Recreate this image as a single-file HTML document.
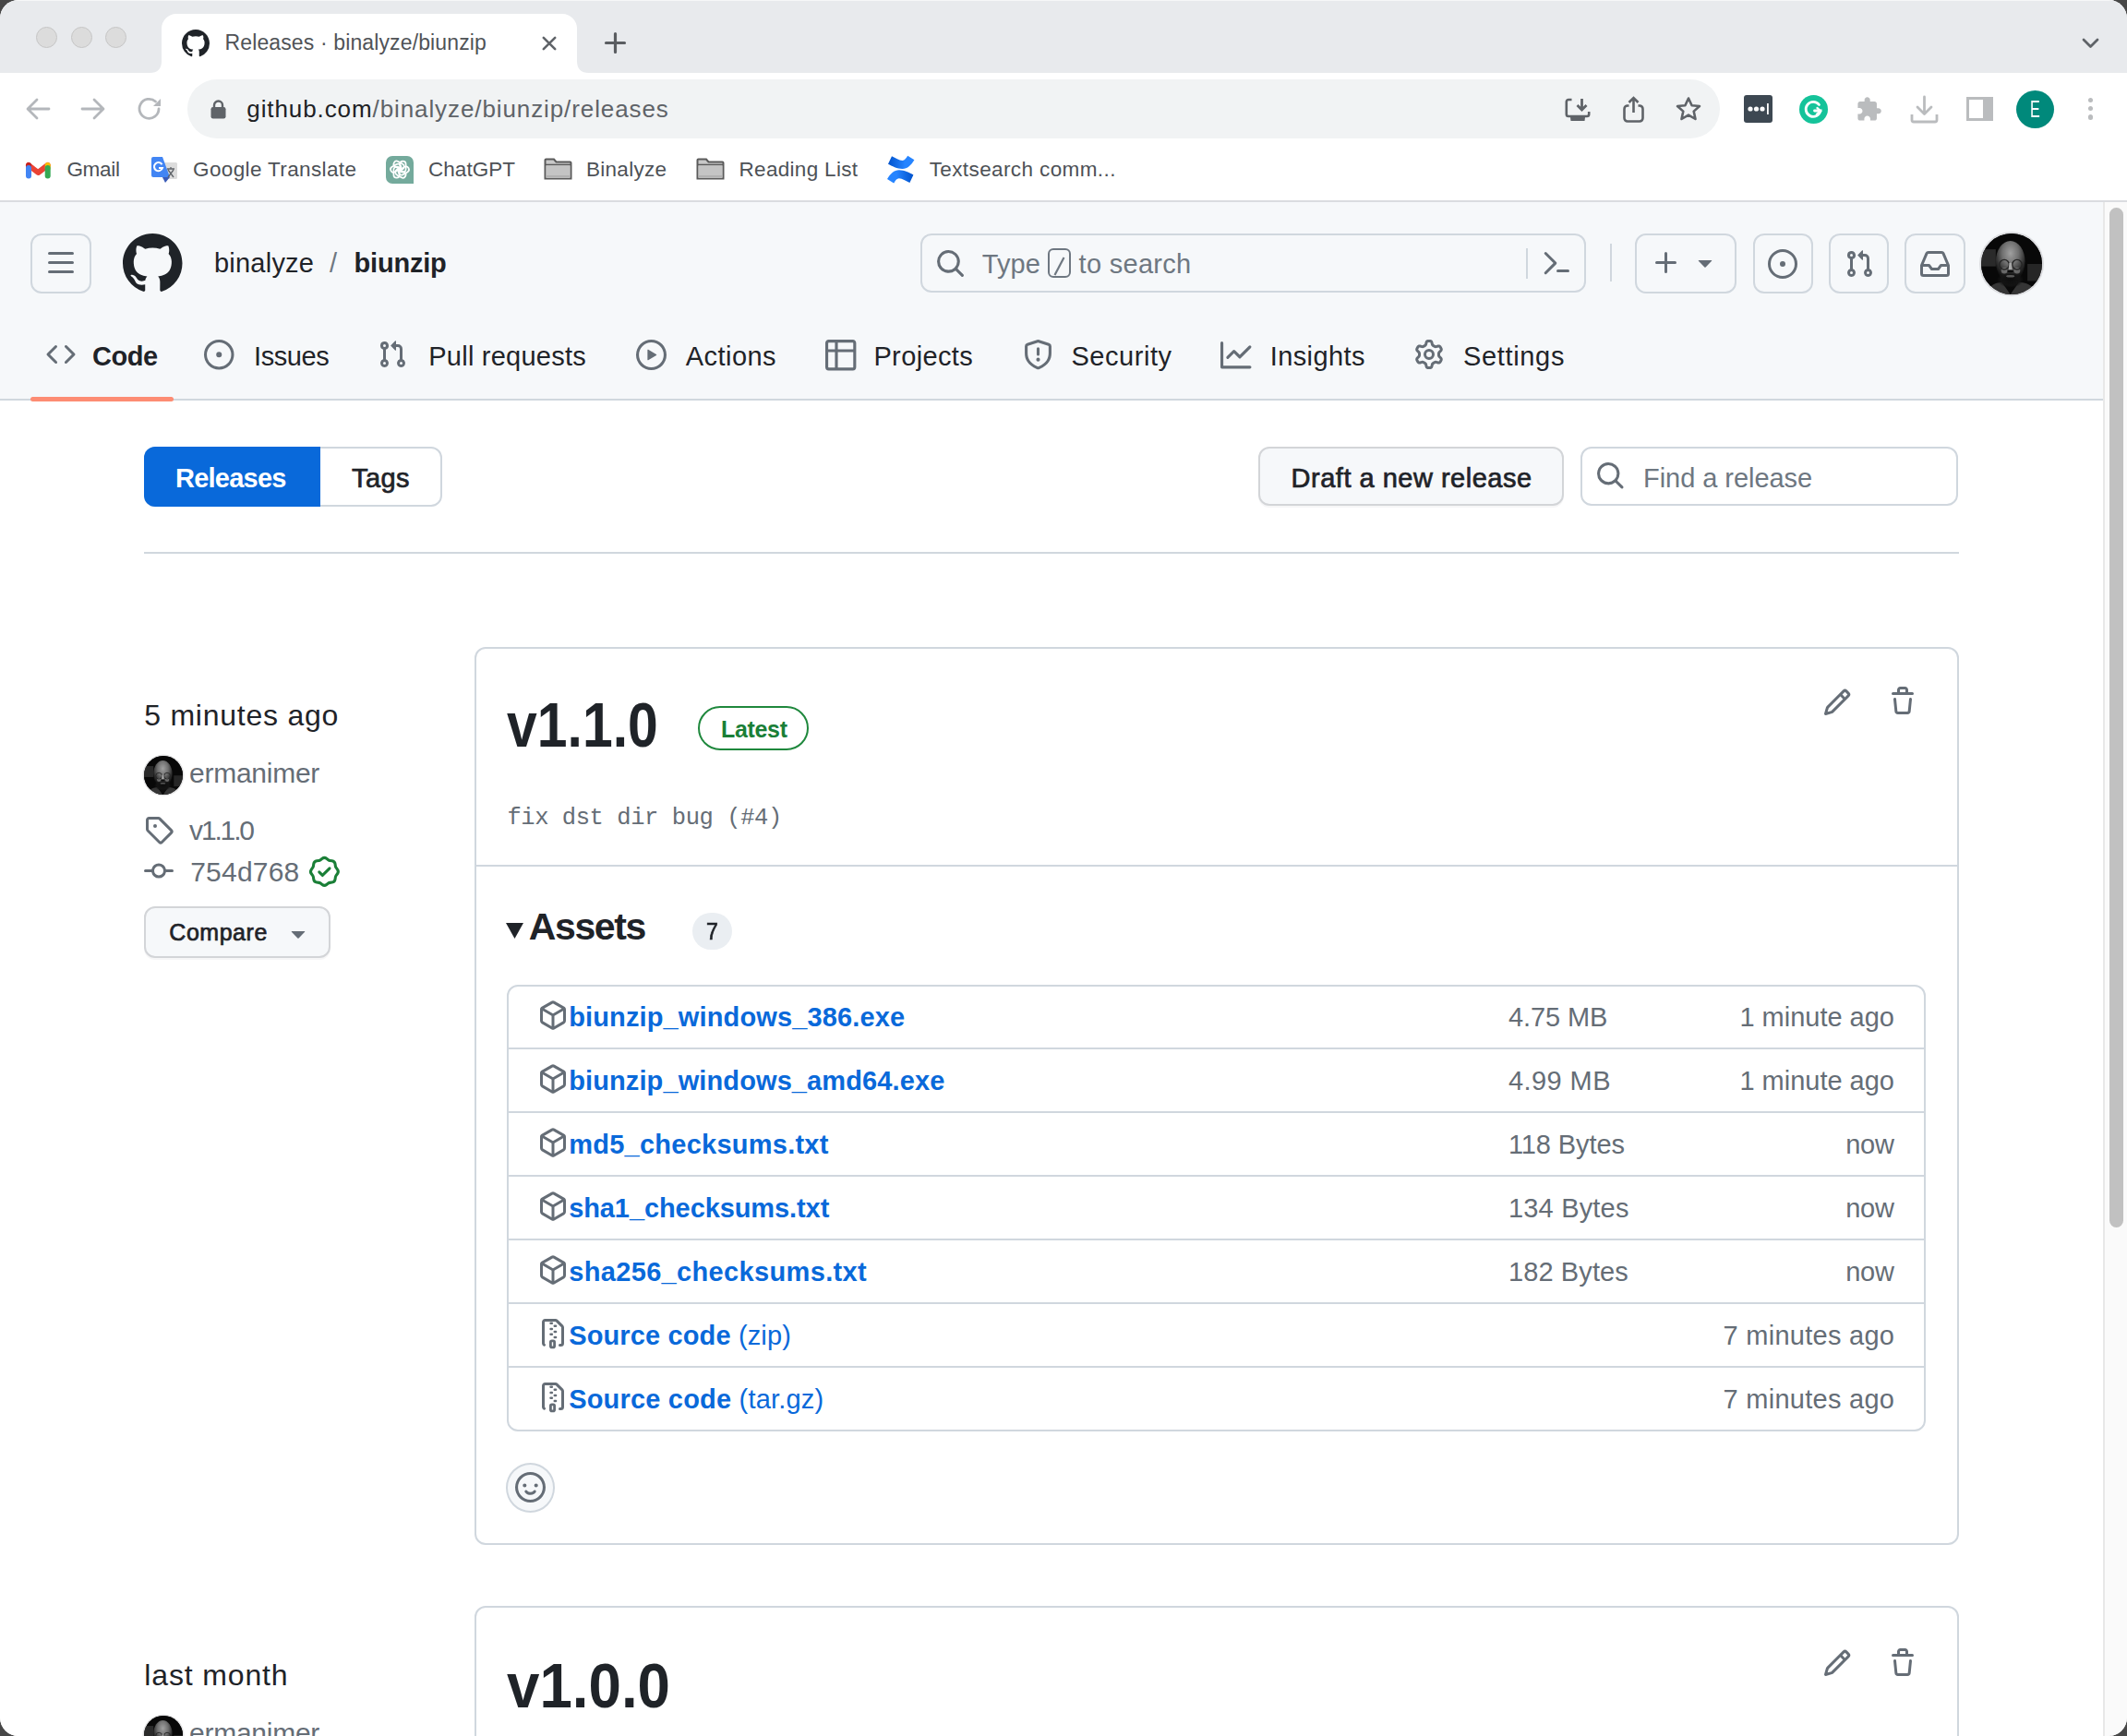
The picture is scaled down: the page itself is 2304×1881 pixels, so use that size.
<!DOCTYPE html>
<html><head><meta charset="utf-8"><title>Releases · binalyze/biunzip</title>
<style>
html,body{margin:0;padding:0;overflow:hidden;}
body{width:2304px;height:1881px;overflow:hidden;background:#474747;position:relative;font-family:"Liberation Sans",sans-serif;}
#win{position:absolute;left:0;top:0;width:2304px;height:1881px;border-radius:20px;overflow:hidden;background:#fff;}
.t{position:absolute;white-space:nowrap;}
.b{position:absolute;}
svg.b{overflow:visible;}
</style></head><body><div id="win">
<div class="b" style="left:0.00px;top:0.00px;width:2304.00px;height:79.00px;background:#e8eaed;"></div>
<div class="b" style="left:0.00px;top:0.00px;width:2304.00px;height:1.20px;background:#f6f7f8;"></div>
<div class="b" style="left:39.00px;top:28.50px;width:23.00px;height:23.00px;border-radius:50%;background:#dcdcdc;border:1.5px solid #c6c6c6;box-sizing:border-box;"></div>
<div class="b" style="left:76.50px;top:28.50px;width:23.00px;height:23.00px;border-radius:50%;background:#dcdcdc;border:1.5px solid #c6c6c6;box-sizing:border-box;"></div>
<div class="b" style="left:114.00px;top:28.50px;width:23.00px;height:23.00px;border-radius:50%;background:#dcdcdc;border:1.5px solid #c6c6c6;box-sizing:border-box;"></div>
<div class="b" style="left:174.50px;top:15.00px;width:450.50px;height:64.00px;background:#fff;border-radius:16px 16px 0 0;"></div>
<svg class="b" style="left:162.00px;top:63.00px;" width="13.00" height="16.00" viewBox="0 0 13 16"><path d="M13 0 V16 H0 Q13 16 13 3 Z" fill="#fff"/></svg>
<svg class="b" style="left:624.50px;top:63.00px;" width="13.00" height="16.00" viewBox="0 0 13 16"><path d="M0 0 V16 H13 Q0 16 0 3 Z" fill="#fff"/></svg>
<svg class="b" style="left:197.00px;top:31.50px;" width="30.00" height="30.00" viewBox="0 0 16 16"><path fill="#1f2328" d="M8 0c4.42 0 8 3.58 8 8a8.013 8.013 0 0 1-5.45 7.59c-.4.08-.55-.17-.55-.38 0-.27.01-1.13.01-2.2 0-.75-.25-1.23-.54-1.48 1.78-.2 3.65-.88 3.65-3.95 0-.88-.31-1.59-.82-2.15.08-.2.36-1.02-.08-2.12 0 0-.67-.22-2.2.82-.64-.18-1.32-.27-2-.27-.68 0-1.36.09-2 .27-1.530-1.03-2.2-.82-2.2-.82-.44 1.1-.16 1.92-.08 2.12-.51.56-.82 1.28-.82 2.15 0 3.06 1.86 3.75 3.64 3.950-.23.2-.44.55-.51 1.07-.46.21-1.61.55-2.33-.66-.15-.24-.6-.83-1.23-.82-.67.01-.27.38.01.53.34.19.73.9.82 1.13.16.45.68 1.31 2.69.94 0 .67.01 1.3.01 1.49 0 .21-.15.45-.55.38A7.995 7.995 0 0 1 0 8c0-4.42 3.58-8 8-8Z"/></svg>
<div class="t" style="left:243.50px;top:35.40px;font-size:23.00px;line-height:23.00px;letter-spacing:0.128px;font-family:'Liberation Sans', sans-serif;"><span style="font-weight:400;color:#505357">Releases · binalyze/biunzip</span></div>
<svg class="b" style="left:586.50px;top:38.50px;" width="16.00" height="16.00" viewBox="0 0 16 16"><path d="M1.8 1.8 L14.2 14.2 M14.2 1.8 L1.8 14.2" stroke="#5f6368" stroke-width="2.6" stroke-linecap="round"/></svg>
<svg class="b" style="left:654.50px;top:35.00px;" width="23.00" height="23.00" viewBox="0 0 23 23"><path d="M11.5 1.5 V21.5 M1.5 11.5 H21.5" stroke="#5a5d61" stroke-width="3.2" stroke-linecap="round"/></svg>
<svg class="b" style="left:2255.00px;top:41.00px;" width="19.00" height="12.00" viewBox="0 0 19 12"><path d="M2 2 L9.5 9.5 L17 2" stroke="#5f6368" stroke-width="2.8" fill="none" stroke-linecap="round" stroke-linejoin="round"/></svg>
<div class="b" style="left:0.00px;top:79.00px;width:2304.00px;height:140.00px;background:#fff;"></div>
<svg class="b" style="left:27.00px;top:104.00px;" width="28.00" height="28.00" viewBox="0 0 28 28"><path d="M26 14 H4 M13 4 L3 14 L13 24" stroke="#b4b7bb" stroke-width="2.8" fill="none" stroke-linecap="round" stroke-linejoin="round"/></svg>
<svg class="b" style="left:87.00px;top:104.00px;" width="28.00" height="28.00" viewBox="0 0 28 28"><path d="M2 14 H24 M15 4 L25 14 L15 24" stroke="#b4b7bb" stroke-width="2.8" fill="none" stroke-linecap="round" stroke-linejoin="round"/></svg>
<svg class="b" style="left:147.00px;top:103.00px;" width="30.00" height="30.00" viewBox="0 0 30 30"><path d="M25 15 A10.5 10.5 0 1 1 21.5 7" stroke="#b4b7bb" stroke-width="2.8" fill="none" stroke-linecap="round"/><path d="M27 4 V12 H19 Z" fill="#b4b7bb"/></svg>
<div class="b" style="left:203.00px;top:86.00px;width:1660.00px;height:64.00px;background:#f1f3f4;border-radius:32px;"></div>
<svg class="b" style="left:228.00px;top:108.00px;" width="17.00" height="21.00" viewBox="0 0 17 21"><path d="M4 9 V6 A4.5 4.5 0 0 1 13 6 V9" stroke="#5f6368" stroke-width="2.4" fill="none"/><rect x="0.5" y="8" width="16" height="12.5" rx="2.2" fill="#5f6368"/></svg>
<div class="t" style="left:267.30px;top:105.40px;font-size:26.00px;line-height:26.00px;letter-spacing:0.903px;font-family:'Liberation Sans', sans-serif;"><span style="font-weight:400;color:#202124">github.com</span><span style="font-weight:400;color:#5f6368">/binalyze/biunzip/releases</span></div>
<svg class="b" style="left:1695.00px;top:106.00px;" width="28.00" height="26.00" viewBox="0 0 28 26"><path d="M7.5 2 H4 A2.2 2.2 0 0 0 1.8 4.2 V17.8 A2.2 2.2 0 0 0 4 20 H24 A2.2 2.2 0 0 0 26.2 17.8 V15" stroke="#5f6368" stroke-width="2.6" fill="none"/><path d="M18.5 1 V12.5 M13.5 8 L18.5 13 L23.5 8" stroke="#5f6368" stroke-width="2.8" fill="none" stroke-linecap="butt" stroke-linejoin="miter"/><path d="M6 21 H22 L21.5 25 H6.5 Z" fill="#5f6368"/></svg>
<svg class="b" style="left:1758.00px;top:104.00px;" width="23.00" height="29.00" viewBox="0 0 23 29"><path d="M6.5 10.5 H5 A3.5 3.5 0 0 0 1.5 14 V24 A3.5 3.5 0 0 0 5 27.5 H18 A3.5 3.5 0 0 0 21.5 24 V14 A3.5 3.5 0 0 0 18 10.5 H16.5" stroke="#5f6368" stroke-width="2.6" fill="none"/><path d="M11.5 18 V2.5 M6.5 7 L11.5 2 L16.5 7" stroke="#5f6368" stroke-width="2.6" fill="none" stroke-linecap="butt"/></svg>
<svg class="b" style="left:1814.00px;top:104.00px;" width="30.00" height="28.00" viewBox="0 0 30 28"><path d="M15 2.5 L18.6 10.2 L27 11 L20.7 16.6 L22.5 25 L15 20.6 L7.5 25 L9.3 16.6 L3 11 L11.4 10.2 Z" stroke="#5f6368" stroke-width="2.6" fill="none" stroke-linejoin="round"/></svg>
<div class="b" style="left:1889.00px;top:103.00px;width:31.00px;height:30.00px;background:#3d4852;border-radius:3px;"></div>
<svg class="b" style="left:1889.00px;top:103.00px;" width="31.00" height="30.00" viewBox="0 0 31 30"><circle cx="7" cy="15" r="2.6" fill="#fff"/><circle cx="13.5" cy="15" r="2.6" fill="#fff"/><circle cx="20" cy="15" r="2.6" fill="#fff"/><rect x="25" y="9" width="1.8" height="12" fill="#fff"/></svg>
<div class="b" style="left:1949.00px;top:103.00px;width:31.00px;height:31.00px;background:#15c39a;border-radius:50%;"></div>
<svg class="b" style="left:1949.00px;top:103.00px;" width="31.00" height="31.00" viewBox="0 0 31 31"><path d="M21.5 10.5 A8 8 0 1 0 23 17 H16.5" stroke="#fff" stroke-width="2.8" fill="none" stroke-linecap="round"/><path d="M19 21 L23 17.5 L19.5 14" stroke="#fff" stroke-width="2.4" fill="none" stroke-linecap="round"/></svg>
<svg class="b" style="left:2010.00px;top:104.00px;" width="29.00" height="29.00" viewBox="0 0 24 24"><path fill="#babcbe" d="M20.5 11H19V7c0-1.1-.9-2-2-2h-4V3.5C13 2.12 11.88 1 10.5 1S8 2.12 8 3.5V5H4c-1.1 0-1.99.9-1.99 2v3.8H3.5c1.49 0 2.7 1.21 2.7 2.7s-1.21 2.7-2.7 2.7H2V20c0 1.1.9 2 2 2h3.8v-1.5c0-1.49 1.21-2.7 2.7-2.7 1.49 0 2.7 1.21 2.7 2.7V22H17c1.1 0 2-.9 2-2v-4h1.5c1.38 0 2.5-1.12 2.5-2.5S21.88 11 20.5 11z"/></svg>
<svg class="b" style="left:2069.00px;top:103.00px;" width="31.00" height="31.00" viewBox="0 0 31 31"><path d="M15.5 2 V20 M8 13 L15.5 20.5 L23 13" stroke="#babcbe" stroke-width="2.8" fill="none" stroke-linecap="round" stroke-linejoin="round"/><path d="M2 21 V27 A2 2 0 0 0 4 29 H27 A2 2 0 0 0 29 27 V21" stroke="#babcbe" stroke-width="2.8" fill="none"/></svg>
<svg class="b" style="left:2130.00px;top:105.00px;" width="29.00" height="26.00" viewBox="0 0 29 26"><rect x="1.5" y="1.5" width="26" height="23" stroke="#babcbe" stroke-width="3" fill="none"/><rect x="18" y="1.5" width="9.5" height="23" fill="#babcbe"/></svg>
<div class="b" style="left:2184.00px;top:97.50px;width:41.00px;height:41.00px;background:#00897b;border-radius:50%;"></div>
<div class="t" style="left:2199.20px;top:105.80px;font-size:25.00px;line-height:25.00px;letter-spacing:0.000px;font-family:'Liberation Sans', sans-serif;transform:scaleX(0.6477);transform-origin:0 0;"><span style="font-weight:400;color:#fff">E</span></div>
<div class="b" style="left:2261.80px;top:106.00px;width:5.20px;height:5.20px;background:#babcbe;border-radius:50%;"></div>
<div class="b" style="left:2261.80px;top:115.20px;width:5.20px;height:5.20px;background:#babcbe;border-radius:50%;"></div>
<div class="b" style="left:2261.80px;top:124.40px;width:5.20px;height:5.20px;background:#babcbe;border-radius:50%;"></div>
<svg class="b" style="left:26.00px;top:171.00px;" width="31.00" height="25.00" viewBox="0 0 31 25"><path d="M5 8 L15.3 16 L25.7 8" stroke="#ea4335" stroke-width="6" fill="none" stroke-linecap="round" stroke-linejoin="round"/><path d="M5 8 V11" stroke="#c5221f" stroke-width="6" stroke-linecap="round"/><path d="M25.7 8 V11" stroke="#fbbc04" stroke-width="6" stroke-linecap="round"/><path d="M5 11 V19.5" stroke="#4285f4" stroke-width="6" stroke-linecap="round"/><path d="M25.7 11 V19.5" stroke="#34a853" stroke-width="6" stroke-linecap="round"/></svg>
<div class="t" style="left:72.40px;top:173.30px;font-size:22.50px;line-height:22.50px;letter-spacing:-0.287px;font-family:'Liberation Sans', sans-serif;"><span style="font-weight:400;color:#4d5156">Gmail</span></div>
<svg class="b" style="left:164.00px;top:169.50px;" width="29.00" height="29.00" viewBox="0 0 29 29"><rect x="12" y="6" width="16" height="18" rx="1.5" fill="#dcdcdc"/><path d="M0 2 A2 2 0 0 1 2 0 H12 L20 22 H2 A2 2 0 0 1 0 20 Z" fill="#4285f4"/><path d="M12 22 L15 28 L20 22 Z" fill="#3a5bb8"/><path d="M11.5 8.2 A4.6 4.6 0 1 0 12 12 H8" stroke="#fff" stroke-width="2" fill="none"/><path d="M17 13 H25 M21 11 V13 M18 14 L24 22 M24 14 L18 22" stroke="#5f6368" stroke-width="1.3" fill="none"/></svg>
<div class="t" style="left:209.00px;top:173.30px;font-size:22.50px;line-height:22.50px;letter-spacing:0.376px;font-family:'Liberation Sans', sans-serif;"><span style="font-weight:400;color:#4d5156">Google Translate</span></div>
<div class="b" style="left:418.40px;top:169.00px;width:29.50px;height:29.60px;background:#74aa9c;border-radius:7px 7px 0 7px;"></div>
<svg class="b" style="left:418.40px;top:169.00px;" width="29.50" height="29.60" viewBox="0 0 29.5 29.6"><g transform="translate(15 14.6)" stroke="#fff" stroke-width="1.7" fill="none"><rect x="-3.2" y="-9" width="6.4" height="12" rx="3.2" transform="rotate(0) translate(3.4 0)" /><rect x="-3.2" y="-9" width="6.4" height="12" rx="3.2" transform="rotate(60) translate(3.4 0)" /><rect x="-3.2" y="-9" width="6.4" height="12" rx="3.2" transform="rotate(120) translate(3.4 0)" /><rect x="-3.2" y="-9" width="6.4" height="12" rx="3.2" transform="rotate(180) translate(3.4 0)" /><rect x="-3.2" y="-9" width="6.4" height="12" rx="3.2" transform="rotate(240) translate(3.4 0)" /><rect x="-3.2" y="-9" width="6.4" height="12" rx="3.2" transform="rotate(300) translate(3.4 0)" /></g></svg>
<div class="t" style="left:464.00px;top:173.30px;font-size:22.50px;line-height:22.50px;letter-spacing:0.037px;font-family:'Liberation Sans', sans-serif;"><span style="font-weight:400;color:#4d5156">ChatGPT</span></div>
<svg class="b" style="left:588.50px;top:171.00px;" width="31.00" height="24.00" viewBox="0 0 31 24"><path d="M1.5 22.5 V2.5 A1 1 0 0 1 2.5 1.5 H11 L13.5 4.5 H28.5 A1 1 0 0 1 29.5 5.5 V22.5 Z" fill="#c8c8c8" stroke="#5a5a5a" stroke-width="2"/><path d="M1.5 7.5 H29.5" stroke="#5a5a5a" stroke-width="1.6"/><rect x="2.5" y="8.3" width="26" height="13.5" fill="#c4c4c4"/><path d="M2.5 20 H28.5" stroke="#ababab" stroke-width="1.5"/></svg>
<div class="t" style="left:635.00px;top:173.30px;font-size:22.50px;line-height:22.50px;letter-spacing:0.279px;font-family:'Liberation Sans', sans-serif;"><span style="font-weight:400;color:#4d5156">Binalyze</span></div>
<svg class="b" style="left:753.50px;top:171.00px;" width="31.00" height="24.00" viewBox="0 0 31 24"><path d="M1.5 22.5 V2.5 A1 1 0 0 1 2.5 1.5 H11 L13.5 4.5 H28.5 A1 1 0 0 1 29.5 5.5 V22.5 Z" fill="#c8c8c8" stroke="#5a5a5a" stroke-width="2"/><path d="M1.5 7.5 H29.5" stroke="#5a5a5a" stroke-width="1.6"/><rect x="2.5" y="8.3" width="26" height="13.5" fill="#c4c4c4"/><path d="M2.5 20 H28.5" stroke="#ababab" stroke-width="1.5"/></svg>
<div class="t" style="left:800.50px;top:173.30px;font-size:22.50px;line-height:22.50px;letter-spacing:0.311px;font-family:'Liberation Sans', sans-serif;"><span style="font-weight:400;color:#4d5156">Reading List</span></div>
<svg class="b" style="left:960.00px;top:168.00px;" width="31.00" height="31.00" viewBox="0 0 31 31"><defs><linearGradient id="cg1" x1="0" y1="0" x2="1" y2="0"><stop offset="0" stop-color="#0052cc"/><stop offset="0.65" stop-color="#2684ff"/></linearGradient></defs><path d="M2 9.8 L6 1.2 C10 3 14 6 17.5 6 C20 6 21.5 3.5 23.2 0.8 L30.4 5.3 C27 11 23 15 17.5 15 C12 15 6 12 2 9.8 Z" fill="url(#cg1)"/><path d="M2 9.8 L6 1.2 C10 3 14 6 17.5 6 C20 6 21.5 3.5 23.2 0.8 L30.4 5.3 C27 11 23 15 17.5 15 C12 15 6 12 2 9.8 Z" fill="url(#cg1)" transform="rotate(180 15.7 15.6)"/></svg>
<div class="t" style="left:1006.70px;top:173.30px;font-size:22.50px;line-height:22.50px;letter-spacing:0.391px;font-family:'Liberation Sans', sans-serif;"><span style="font-weight:400;color:#4d5156">Textsearch comm...</span></div>
<div class="b" style="left:0.00px;top:217.00px;width:2304.00px;height:2.00px;background:#dadce0;"></div>
<div class="b" style="left:0.00px;top:219.00px;width:2278.00px;height:213.00px;background:#f6f8fa;"></div>
<div class="b" style="left:0.00px;top:432.00px;width:2278.00px;height:2.00px;background:#d0d7de;"></div>
<div class="b" style="left:0.00px;top:434.00px;width:2278.00px;height:1447.00px;background:#fff;"></div>
<div class="b" style="left:2278.00px;top:219.00px;width:26.00px;height:1662.00px;background:#fafafa;border-left:2px solid #e8e8e8;box-sizing:border-box;"></div>
<div class="b" style="left:2285.30px;top:225.00px;width:14.70px;height:1104.50px;background:#c1c1c1;border-radius:7.5px;"></div>
<div class="b" style="left:33.30px;top:253.00px;width:65.40px;height:65.00px;background:#f6f8fa;border:2px solid #d0d7de;border-radius:12px;box-sizing:border-box;"></div>
<svg class="b" style="left:50.00px;top:268.80px;" width="32.00" height="32.00" viewBox="0 0 16 16"><path fill="#656d76" d="M1 2.75A.75.75 0 0 1 1.75 2h12.5a.75.75 0 0 1 0 1.5H1.75A.75.75 0 0 1 1 2.75Zm0 5A.75.75 0 0 1 1.75 7h12.5a.75.75 0 0 1 0 1.5H1.75A.75.75 0 0 1 1 7.75ZM1.75 12h12.5a.75.75 0 0 1 0 1.5H1.75a.75.75 0 0 1 0-1.5Z"/></svg>
<svg class="b" style="left:132.60px;top:252.50px;" width="64.50" height="64.50" viewBox="0 0 16 16"><path fill="#1f2328" d="M8 0c4.42 0 8 3.58 8 8a8.013 8.013 0 0 1-5.45 7.59c-.4.08-.55-.17-.55-.38 0-.27.01-1.13.01-2.2 0-.75-.25-1.23-.54-1.48 1.78-.2 3.65-.88 3.65-3.95 0-.88-.31-1.59-.82-2.15.08-.2.36-1.02-.08-2.12 0 0-.67-.22-2.2.82-.64-.18-1.32-.27-2-.27-.68 0-1.36.09-2 .27-1.530-1.03-2.2-.82-2.2-.82-.44 1.1-.16 1.92-.08 2.12-.51.56-.82 1.28-.82 2.15 0 3.06 1.86 3.75 3.64 3.950-.23.2-.44.55-.51 1.07-.46.21-1.61.55-2.33-.66-.15-.24-.6-.83-1.23-.82-.67.01-.27.38.01.53.34.19.73.9.82 1.13.16.45.68 1.31 2.69.94 0 .67.01 1.3.01 1.49 0 .21-.15.45-.55.38A7.995 7.995 0 0 1 0 8c0-4.42 3.58-8 8-8Z"/></svg>
<div class="t" style="left:231.90px;top:270.60px;font-size:29.00px;line-height:29.00px;letter-spacing:0.243px;font-family:'Liberation Sans', sans-serif;"><span style="font-weight:400;color:#1f2328">binalyze</span></div>
<div class="t" style="left:357.00px;top:270.60px;font-size:29.00px;line-height:29.00px;letter-spacing:0.000px;font-family:'Liberation Sans', sans-serif;"><span style="font-weight:400;color:#6e7781">/</span></div>
<div class="t" style="left:383.60px;top:270.60px;font-size:29.00px;line-height:29.00px;letter-spacing:-0.212px;font-family:'Liberation Sans', sans-serif;"><span style="font-weight:600;color:#1f2328">biunzip</span></div>
<div class="b" style="left:996.80px;top:252.50px;width:721.00px;height:64.30px;background:#f6f8fa;border:2px solid #d0d7de;border-radius:12px;box-sizing:border-box;"></div>
<svg class="b" style="left:1012.50px;top:269.00px;" width="33.00" height="33.00" viewBox="0 0 16 16"><path fill="#656d76" d="M10.68 11.74a6 6 0 0 1-7.922-8.982 6 6 0 0 1 8.982 7.922l3.04 3.04a.749.749 0 0 1-.326 1.275.749.749 0 0 1-.734-.215ZM11.5 7a4.499 4.499 0 1 0-8.997 0A4.499 4.499 0 0 0 11.5 7Z"/></svg>
<div class="t" style="left:1063.70px;top:272.30px;font-size:29.00px;line-height:29.00px;letter-spacing:0.076px;font-family:'Liberation Sans', sans-serif;"><span style="font-weight:400;color:#6e7781">Type</span></div>
<div class="b" style="left:1135.30px;top:269.40px;width:24.70px;height:32.10px;border:2px solid #6e7781;border-radius:6px;box-sizing:border-box;"></div>
<svg class="b" style="left:1141.00px;top:278.00px;" width="13.00" height="21.00" viewBox="0 0 13 21"><path d="M11.5 1 L1.5 20" stroke="#6e7781" stroke-width="2.2"/></svg>
<div class="t" style="left:1168.60px;top:272.30px;font-size:29.00px;line-height:29.00px;letter-spacing:0.290px;font-family:'Liberation Sans', sans-serif;"><span style="font-weight:400;color:#6e7781">to search</span></div>
<div class="b" style="left:1652.50px;top:269.00px;width:2.00px;height:32.50px;background:#d0d7de;"></div>
<svg class="b" style="left:1670.00px;top:269.00px;" width="32.00" height="32.00" viewBox="0 0 16 16"><path fill="#656d76" d="m6.354 8.04-4.773 4.773a.75.75 0 1 0 1.061 1.06L7.945 8.57a.75.75 0 0 0 0-1.06L2.642 2.206a.75.75 0 0 0-1.06 1.061L6.353 8.04ZM8.75 11.5a.75.75 0 0 0 0 1.5h5.5a.75.75 0 0 0 0-1.5h-5.5Z"/></svg>
<div class="b" style="left:1743.70px;top:264.30px;width:2.00px;height:41.20px;background:#d0d7de;"></div>
<div class="b" style="left:1770.80px;top:252.80px;width:110.40px;height:65.60px;background:#f6f8fa;border:2px solid #d0d7de;border-radius:12px;box-sizing:border-box;"></div>
<svg class="b" style="left:1788.50px;top:269.00px;" width="32.00" height="32.00" viewBox="0 0 16 16"><path fill="#656d76" d="M7.75 2a.75.75 0 0 1 .75.75V7h4.25a.75.75 0 0 1 0 1.5H8.5v4.25a.75.75 0 0 1-1.5 0V8.5H2.75a.75.75 0 0 1 0-1.5H7V2.75A.75.75 0 0 1 7.75 2Z"/></svg>
<svg class="b" style="left:1830.50px;top:268.00px;" width="32.00" height="32.00" viewBox="0 0 16 16"><path fill="#656d76" d="m4.427 7.427 3.396 3.396a.25.25 0 0 0 .354 0l3.396-3.396A.25.25 0 0 0 11.396 7H4.604a.25.25 0 0 0-.177.427Z"/></svg>
<div class="b" style="left:1898.50px;top:252.80px;width:65.00px;height:65.60px;background:#f6f8fa;border:2px solid #d0d7de;border-radius:12px;box-sizing:border-box;"></div>
<svg class="b" style="left:1915.00px;top:269.50px;" width="32.00" height="32.00" viewBox="0 0 16 16"><path fill="#656d76" d="M8 9.5a1.5 1.5 0 1 0 0-3 1.5 1.5 0 0 0 0 3Z M8 0a8 8 0 1 1 0 16A8 8 0 0 1 8 0ZM1.5 8a6.5 6.5 0 1 0 13 0 6.5 6.5 0 0 0-13 0Z"/></svg>
<div class="b" style="left:1980.80px;top:252.80px;width:65.40px;height:65.60px;background:#f6f8fa;border:2px solid #d0d7de;border-radius:12px;box-sizing:border-box;"></div>
<svg class="b" style="left:1997.50px;top:269.50px;" width="32.00" height="32.00" viewBox="0 0 16 16"><path fill="#656d76" d="M1.5 3.25a2.25 2.25 0 1 1 3 2.122v5.256a2.251 2.251 0 1 1-1.5 0V5.372A2.25 2.25 0 0 1 1.5 3.25Zm5.677-.177L9.573.677A.25.25 0 0 1 10 .854V2.5h1A2.5 2.5 0 0 1 13.5 5v5.628a2.251 2.251 0 1 1-1.5 0V5a1 1 0 0 0-1-1h-1v1.646a.25.25 0 0 1-.427.177L7.177 3.427a.25.25 0 0 1 0-.354ZM3.75 2.5a.75.75 0 1 0 0 1.5.75.75 0 0 0 0-1.5Zm0 9.5a.75.75 0 1 0 0 1.5.75.75 0 0 0 0-1.5Zm8.25.75a.75.75 0 1 0 1.5 0 .75.75 0 0 0-1.5 0Z"/></svg>
<div class="b" style="left:2063.20px;top:252.80px;width:65.90px;height:65.60px;background:#f6f8fa;border:2px solid #d0d7de;border-radius:12px;box-sizing:border-box;"></div>
<svg class="b" style="left:2080.00px;top:269.50px;" width="32.00" height="32.00" viewBox="0 0 16 16"><path fill="#656d76" d="M2.8 2.06A1.75 1.75 0 0 1 4.41 1h7.18c.7 0 1.333.417 1.61 1.06l2.74 6.395c.04.093.06.194.06.295v4.5A1.75 1.75 0 0 1 14.25 15H1.75A1.75 1.75 0 0 1 0 13.250v-4.5c0-.101.02-.202.06-.295Zm1.61.44a.25.25 0 0 0-.23.152L1.887 8H4.75a.75.75 0 0 1 .6.3L6.625 10h2.75l1.275-1.7a.75.75 0 0 1 .6-.3h2.863L11.820 2.652a.25.25 0 0 0-.23-.152Zm10.09 7h-2.875l-1.275 1.7a.75.75 0 0 1-.6.3h-3.5a.75.75 0 0 1-.6-.3L4.375 9.5H1.5v3.75c0 .138.112.25.25.25h12.5a.25.25 0 0 0 .25-.25Z"/></svg>
<div class="b" style="left:2145.50px;top:252.50px;width:66.00px;height:66.00px;border-radius:50%;overflow:hidden;background:#0a0a0a;box-shadow:0 0 0 2.0px rgba(31,35,40,0.12);"><svg width="66.00" height="66.00" viewBox="0 0 100 100" style="display:block;filter:blur(0.73px)"><defs><radialGradient id="av29h" cx="0.5" cy="0.3" r="0.62"><stop offset="0" stop-color="#a0a0a0"/><stop offset="0.45" stop-color="#707070"/><stop offset="0.8" stop-color="#303030"/><stop offset="1" stop-color="#111"/></radialGradient><radialGradient id="av29b" cx="0.5" cy="0.5" r="0.5"><stop offset="0" stop-color="#0d0d0d"/><stop offset="0.7" stop-color="#141414" stop-opacity="0.9"/><stop offset="1" stop-color="#141414" stop-opacity="0"/></radialGradient></defs><rect width="100" height="100" fill="#080808"/><rect x="0" y="26" width="24" height="28" fill="#2a2a2a"/><rect x="76" y="50" width="24" height="28" fill="#262626"/><path d="M8 100 C12 82 30 78 48 80 C68 78 86 82 92 100 Z" fill="#353535"/><path d="M34 80 L48 100 L62 80 Z" fill="#0a0a0a"/><ellipse cx="48" cy="46" rx="24" ry="34" fill="url(#av29h)"/><ellipse cx="48" cy="76" rx="22" ry="13" fill="url(#av29b)"/><circle cx="38" cy="61" r="5" fill="#808080" opacity="0.7"/><circle cx="59" cy="61" r="5" fill="#808080" opacity="0.7"/><circle cx="38" cy="51" r="8" fill="none" stroke="#262626" stroke-width="2.2"/><circle cx="59" cy="51" r="8" fill="none" stroke="#262626" stroke-width="2.2"/><path d="M46 48 L50 48 L51 60 L45 60 Z" fill="#a8a8a8"/><ellipse cx="48" cy="62" rx="5" ry="2.2" fill="#0c0c0c"/><ellipse cx="48" cy="70" rx="7" ry="2" fill="#5a5a5a"/></svg></div>
<svg class="b" style="left:50.00px;top:368.30px;" width="32.00" height="32.00" viewBox="0 0 16 16"><path fill="#656d76" d="m11.28 3.22 4.25 4.25a.75.75 0 0 1 0 1.06l-4.25 4.25a.749.749 0 0 1-1.275-.326.749.749 0 0 1 .215-.734L13.94 8l-3.72-3.72a.749.749 0 0 1 .326-1.275.749.749 0 0 1 .734.215Zm-6.56 0a.751.751 0 0 1 1.042.018.751.751 0 0 1 .018 1.042L2.06 8l3.72 3.72a.749.749 0 0 1-.326 1.275.749.749 0 0 1-.734-.215L.47 8.53a.75.75 0 0 1 0-1.06Z"/></svg>
<div class="t" style="left:100.00px;top:371.60px;font-size:29.00px;line-height:29.00px;letter-spacing:-0.433px;font-family:'Liberation Sans', sans-serif;"><span style="font-weight:600;color:#1f2328">Code</span></div>
<svg class="b" style="left:221.40px;top:368.30px;" width="32.50" height="32.50" viewBox="0 0 16 16"><path fill="#656d76" d="M8 9.5a1.5 1.5 0 1 0 0-3 1.5 1.5 0 0 0 0 3Z M8 0a8 8 0 1 1 0 16A8 8 0 0 1 8 0ZM1.5 8a6.5 6.5 0 1 0 13 0 6.5 6.5 0 0 0-13 0Z"/></svg>
<div class="t" style="left:275.00px;top:371.60px;font-size:29.00px;line-height:29.00px;letter-spacing:-0.402px;font-family:'Liberation Sans', sans-serif;"><span style="font-weight:400;color:#1f2328">Issues</span></div>
<svg class="b" style="left:409.00px;top:368.30px;" width="32.00" height="32.00" viewBox="0 0 16 16"><path fill="#656d76" d="M1.5 3.25a2.25 2.25 0 1 1 3 2.122v5.256a2.251 2.251 0 1 1-1.5 0V5.372A2.25 2.25 0 0 1 1.5 3.25Zm5.677-.177L9.573.677A.25.25 0 0 1 10 .854V2.5h1A2.5 2.5 0 0 1 13.5 5v5.628a2.251 2.251 0 1 1-1.5 0V5a1 1 0 0 0-1-1h-1v1.646a.25.25 0 0 1-.427.177L7.177 3.427a.25.25 0 0 1 0-.354ZM3.75 2.5a.75.75 0 1 0 0 1.5.75.75 0 0 0 0-1.5Zm0 9.5a.75.75 0 1 0 0 1.5.75.75 0 0 0 0-1.5Zm8.25.75a.75.75 0 1 0 1.5 0 .75.75 0 0 0-1.5 0Z"/></svg>
<div class="t" style="left:464.30px;top:371.60px;font-size:29.00px;line-height:29.00px;letter-spacing:0.229px;font-family:'Liberation Sans', sans-serif;"><span style="font-weight:400;color:#1f2328">Pull requests</span></div>
<svg class="b" style="left:689.00px;top:368.30px;" width="33.00" height="33.00" viewBox="0 0 16 16"><path fill="#656d76" d="M8 0a8 8 0 1 1 0 16A8 8 0 0 1 8 0ZM1.5 8a6.5 6.5 0 1 0 13 0 6.5 6.5 0 0 0-13 0Zm4.879-2.773 4.264 2.559a.25.25 0 0 1 0 .428l-4.264 2.559A.25.25 0 0 1 6 10.559V5.442a.25.25 0 0 1 .379-.215Z"/></svg>
<div class="t" style="left:742.70px;top:371.60px;font-size:29.00px;line-height:29.00px;letter-spacing:0.468px;font-family:'Liberation Sans', sans-serif;"><span style="font-weight:400;color:#1f2328">Actions</span></div>
<svg class="b" style="left:894.00px;top:368.30px;" width="33.40" height="33.40" viewBox="0 0 16 16"><path fill="#656d76" d="M0 1.75C0 .784.784 0 1.75 0h12.5C15.216 0 16 .784 16 1.75v12.5A1.75 1.75 0 0 1 14.25 16H1.75A1.75 1.75 0 0 1 0 14.25ZM6.5 6.5v8h7.75a.25.25 0 0 0 .25-.25V6.5Zm8-1.5V1.75a.25.25 0 0 0-.25-.25H6.5V5Zm-13 1.5v7.75c0 .138.112.25.25.25H5v-8ZM5 5V1.5H1.75a.25.25 0 0 0-.25.25V5Z"/></svg>
<div class="t" style="left:946.40px;top:371.60px;font-size:29.00px;line-height:29.00px;letter-spacing:0.379px;font-family:'Liberation Sans', sans-serif;"><span style="font-weight:400;color:#1f2328">Projects</span></div>
<svg class="b" style="left:1107.50px;top:368.30px;" width="33.00" height="33.00" viewBox="0 0 16 16"><path fill="#656d76" d="M7.467.133a1.748 1.748 0 0 1 1.066 0l5.25 1.68A1.75 1.75 0 0 1 15 3.48V7c0 1.566-.32 3.182-1.303 4.682-.983 1.498-2.585 2.813-5.032 3.855a1.697 1.697 0 0 1-1.33 0c-2.447-1.042-4.049-2.357-5.032-3.855C1.32 10.182 1 8.566 1 7V3.48a1.755 1.755 0 0 1 1.217-1.667Zm.61 1.429a.25.25 0 0 0-.153 0l-5.25 1.68a.25.25 0 0 0-.174.238V7c0 1.358.275 2.666 1.057 3.86.784 1.194 2.121 2.34 4.366 3.297a.196.196 0 0 0 .154 0c2.245-.956 3.582-2.104 4.366-3.298C13.225 9.666 13.5 8.36 13.5 7V3.48a.251.251 0 0 0-.174-.237l-5.25-1.68ZM8.75 4.75v3a.75.75 0 0 1-1.5 0v-3a.75.75 0 0 1 1.5 0ZM9 10.5a1 1 0 1 1-2 0 1 1 0 0 1 2 0Z"/></svg>
<div class="t" style="left:1160.40px;top:371.60px;font-size:29.00px;line-height:29.00px;letter-spacing:0.550px;font-family:'Liberation Sans', sans-serif;"><span style="font-weight:400;color:#1f2328">Security</span></div>
<svg class="b" style="left:1322.30px;top:368.30px;" width="33.50" height="33.50" viewBox="0 0 16 16"><path fill="#656d76" d="M1.5 1.75V13.5h13.75a.75.75 0 0 1 0 1.5H.75a.75.75 0 0 1-.75-.75V1.75a.75.75 0 0 1 1.5 0Zm14.28 2.53-5.25 5.25a.75.75 0 0 1-1.06 0L7 7.06 4.28 9.78a.751.751 0 0 1-1.042-.018.751.751 0 0 1-.018-1.042l3.25-3.25a.75.75 0 0 1 1.06 0L10 7.94l4.72-4.72a.751.751 0 0 1 1.042.018.751.751 0 0 1 .018 1.042Z"/></svg>
<div class="t" style="left:1375.70px;top:371.60px;font-size:29.00px;line-height:29.00px;letter-spacing:0.395px;font-family:'Liberation Sans', sans-serif;"><span style="font-weight:400;color:#1f2328">Insights</span></div>
<svg class="b" style="left:1532.40px;top:368.30px;" width="32.00" height="32.00" viewBox="0 0 16 16"><path fill="#656d76" d="M8 0a8.2 8.2 0 0 1 .701.031C9.444.095 9.99.645 10.16 1.29l.288 1.107c.018.066.079.158.212.224.231.114.454.243.668.386.123.082.233.09.299.071l1.103-.303c.644-.176 1.392.021 1.82.63.27.385.506.792.704 1.218.315.675.111 1.422-.364 1.891l-.814.806c-.049.048-.098.147-.088.294.016.257.016.515 0 .772-.01.147.038.246.088.294l.814.806c.475.469.679 1.216.364 1.891a7.977 7.977 0 0 1-.704 1.217c-.428.61-1.176.807-1.82.63l-1.102-.302c-.067-.019-.177-.011-.3.071a5.909 5.909 0 0 1-.668.386c-.133.066-.194.158-.211.224l-.29 1.106c-.168.646-.715 1.196-1.458 1.26a8.006 8.006 0 0 1-1.402 0c-.743-.064-1.289-.614-1.458-1.26l-.289-1.106c-.018-.066-.079-.158-.212-.224a5.738 5.738 0 0 1-.668-.386c-.123-.082-.233-.09-.299-.071l-1.103.303c-.644.176-1.392-.021-1.82-.63a8.12 8.12 0 0 1-.704-1.218c-.315-.675-.111-1.422.363-1.891l.815-.806c.05-.048.098-.147.088-.294a6.214 6.214 0 0 1 0-.772c.01-.147-.038-.246-.088-.294l-.815-.806C.635 6.045.431 5.298.746 4.623a7.92 7.92 0 0 1 .704-1.217c.428-.61 1.176-.807 1.82-.63l1.102.302c.067.019.177.011.3-.071.214-.143.437-.272.668-.386.133-.066.194-.158.211-.224l.29-1.106C6.009.645 6.556.095 7.299.03 7.53.01 7.764 0 8 0Zm-.571 1.525c-.036.003-.108.036-.137.146l-.289 1.105c-.147.561-.549.967-.998 1.189-.173.086-.34.183-.5.29-.417.278-.97.423-1.529.27l-1.103-.303c-.109-.03-.175.016-.195.045-.22.312-.412.644-.573.99-.014.031-.021.11.059.19l.815.806c.411.406.562.957.53 1.456a4.709 4.709 0 0 0 0 .582c.032.499-.119 1.05-.53 1.456l-.815.806c-.081.08-.073.159-.059.19.162.346.353.677.573.989.02.03.085.076.195.046l1.102-.303c.56-.153 1.113-.008 1.53.27.161.107.328.204.501.29.447.222.85.629.997 1.189l.289 1.105c.029.109.101.143.137.146a6.6 6.6 0 0 0 1.142 0c.036-.003.108-.036.137-.146l.289-1.105c.147-.561.549-.967.998-1.189.173-.086.34-.183.5-.29.417-.278.97-.423 1.529-.27l1.103.303c.109.029.175-.016.195-.045.22-.313.411-.644.573-.99.014-.031.021-.11-.059-.19l-.815-.806c-.411-.406-.562-.957-.53-1.456a4.709 4.709 0 0 0 0-.582c-.032-.499.119-1.05.53-1.456l.815-.806c.081-.08.073-.159.059-.19a6.464 6.464 0 0 0-.573-.989c-.02-.03-.085-.076-.195-.046l-1.102.303c-.56.153-1.113.008-1.53-.27a4.44 4.44 0 0 0-.501-.29c-.447-.222-.85-.629-.997-1.189l-.289-1.105c-.029-.11-.101-.143-.137-.146a6.6 6.6 0 0 0-1.142 0ZM11 8a3 3 0 1 1-6 0 3 3 0 0 1 6 0ZM9.5 8a1.5 1.5 0 1 0-3.001.001A1.5 1.5 0 0 0 9.5 8Z"/></svg>
<div class="t" style="left:1585.00px;top:371.60px;font-size:29.00px;line-height:29.00px;letter-spacing:0.660px;font-family:'Liberation Sans', sans-serif;"><span style="font-weight:400;color:#1f2328">Settings</span></div>
<div class="b" style="left:33.30px;top:430.00px;width:155.10px;height:4.50px;background:#fd8c73;border-radius:3px;"></div>
<div class="b" style="left:156.00px;top:484.00px;width:323.00px;height:65.00px;border:2px solid #d0d7de;border-radius:12px;box-sizing:border-box;background:#fff;"></div>
<div class="b" style="left:156.00px;top:484.00px;width:191.20px;height:65.00px;background:#0969da;border-radius:12px 0 0 12px;"></div>
<div class="t" style="left:190.00px;top:504.00px;font-size:29.00px;line-height:29.00px;letter-spacing:-0.753px;font-family:'Liberation Sans', sans-serif;"><span style="font-weight:600;color:#fff">Releases</span></div>
<div class="t" style="left:381.00px;top:504.00px;font-size:29.00px;line-height:29.00px;letter-spacing:0.451px;font-family:'Liberation Sans', sans-serif;"><span style="font-weight:400;color:#1f2328;-webkit-text-stroke:0.7px #1f2328">Tags</span></div>
<div class="b" style="left:1362.60px;top:484.40px;width:331.70px;height:64.00px;background:#f6f8fa;border:2px solid #d3d5d8;border-radius:12px;box-sizing:border-box;box-shadow:0 2px 0 rgba(31,35,40,0.04);"></div>
<div class="t" style="left:1398.60px;top:503.90px;font-size:29.00px;line-height:29.00px;letter-spacing:0.502px;font-family:'Liberation Sans', sans-serif;"><span style="font-weight:400;color:#1f2328;-webkit-text-stroke:0.7px #1f2328">Draft a new release</span></div>
<div class="b" style="left:1712.30px;top:484.40px;width:409.20px;height:64.00px;border:2px solid #d0d7de;border-radius:12px;box-sizing:border-box;background:#fff;"></div>
<svg class="b" style="left:1727.80px;top:498.50px;" width="32.50" height="32.50" viewBox="0 0 16 16"><path fill="#656d76" d="M10.68 11.74a6 6 0 0 1-7.922-8.982 6 6 0 0 1 8.982 7.922l3.04 3.04a.749.749 0 0 1-.326 1.275.749.749 0 0 1-.734-.215ZM11.5 7a4.499 4.499 0 1 0-8.997 0A4.499 4.499 0 0 0 11.5 7Z"/></svg>
<div class="t" style="left:1780.00px;top:504.40px;font-size:29.00px;line-height:29.00px;letter-spacing:-0.044px;font-family:'Liberation Sans', sans-serif;"><span style="font-weight:400;color:#6e7781">Find a release</span></div>
<div class="b" style="left:156.00px;top:598.00px;width:1966.00px;height:2.00px;background:#d0d7de;"></div>
<div class="t" style="left:156.20px;top:758.50px;font-size:32.00px;line-height:32.00px;letter-spacing:0.765px;font-family:'Liberation Sans', sans-serif;"><span style="font-weight:400;color:#1f2328">5 minutes ago</span></div>
<div class="b" style="left:155.80px;top:818.50px;width:42.50px;height:42.50px;border-radius:50%;overflow:hidden;background:#0a0a0a;box-shadow:0 0 0 1.5px rgba(31,35,40,0.12);"><svg width="42.50" height="42.50" viewBox="0 0 100 100" style="display:block;filter:blur(0.47px)"><defs><radialGradient id="av58h" cx="0.5" cy="0.3" r="0.62"><stop offset="0" stop-color="#a0a0a0"/><stop offset="0.45" stop-color="#707070"/><stop offset="0.8" stop-color="#303030"/><stop offset="1" stop-color="#111"/></radialGradient><radialGradient id="av58b" cx="0.5" cy="0.5" r="0.5"><stop offset="0" stop-color="#0d0d0d"/><stop offset="0.7" stop-color="#141414" stop-opacity="0.9"/><stop offset="1" stop-color="#141414" stop-opacity="0"/></radialGradient></defs><rect width="100" height="100" fill="#080808"/><rect x="0" y="26" width="24" height="28" fill="#2a2a2a"/><rect x="76" y="50" width="24" height="28" fill="#262626"/><path d="M8 100 C12 82 30 78 48 80 C68 78 86 82 92 100 Z" fill="#353535"/><path d="M34 80 L48 100 L62 80 Z" fill="#0a0a0a"/><ellipse cx="48" cy="46" rx="24" ry="34" fill="url(#av58h)"/><ellipse cx="48" cy="76" rx="22" ry="13" fill="url(#av58b)"/><circle cx="38" cy="61" r="5" fill="#808080" opacity="0.7"/><circle cx="59" cy="61" r="5" fill="#808080" opacity="0.7"/><circle cx="38" cy="51" r="8" fill="none" stroke="#262626" stroke-width="2.2"/><circle cx="59" cy="51" r="8" fill="none" stroke="#262626" stroke-width="2.2"/><path d="M46 48 L50 48 L51 60 L45 60 Z" fill="#a8a8a8"/><ellipse cx="48" cy="62" rx="5" ry="2.2" fill="#0c0c0c"/><ellipse cx="48" cy="70" rx="7" ry="2" fill="#5a5a5a"/></svg></div>
<div class="t" style="left:205.10px;top:822.80px;font-size:30.00px;line-height:30.00px;letter-spacing:-0.271px;font-family:'Liberation Sans', sans-serif;"><span style="font-weight:400;color:#656d76">ermanimer</span></div>
<svg class="b" style="left:156.00px;top:882.50px;" width="32.00" height="32.00" viewBox="0 0 16 16"><path fill="#656d76" d="M1 7.775V2.75C1 1.784 1.784 1 2.75 1h5.025c.464 0 .91.184 1.238.513l6.25 6.25a1.75 1.75 0 0 1 0 2.474l-5.026 5.026a1.75 1.75 0 0 1-2.474 0l-6.25-6.25A1.752 1.752 0 0 1 1 7.775Zm1.5 0c0 .066.026.13.073.177l6.25 6.25a.25.25 0 0 0 .354 0l5.025-5.025a.25.25 0 0 0 0-.354l-6.250-6.25a.25.25 0 0 0-.177-.073H2.75a.25.25 0 0 0-.25.25ZM6 5a1 1 0 1 1 0 2 1 1 0 0 1 0-2Z"/></svg>
<div class="t" style="left:205.10px;top:885.30px;font-size:30.00px;line-height:30.00px;letter-spacing:-2.164px;font-family:'Liberation Sans', sans-serif;"><span style="font-weight:400;color:#656d76">v1.1.0</span></div>
<svg class="b" style="left:156.00px;top:928.30px;" width="32.00" height="32.00" viewBox="0 0 16 16"><path fill="#656d76" d="M11.93 8.5a4.002 4.002 0 0 1-7.86 0H.75a.75.75 0 0 1 0-1.5h3.32a4.002 4.002 0 0 1 7.86 0h3.32a.75.75 0 0 1 0 1.5Zm-1.43-.75a2.5 2.5 0 1 0-5 0 2.5 2.5 0 0 0 5 0Z"/></svg>
<div class="t" style="left:206.20px;top:930.40px;font-size:30.00px;line-height:30.00px;letter-spacing:0.218px;font-family:'Liberation Sans', sans-serif;"><span style="font-weight:400;color:#656d76">754d768</span></div>
<svg class="b" style="left:335.00px;top:928.40px;" width="32.80" height="32.80" viewBox="0 0 16 16"><path fill="#1a7f37" d="m9.585.52.929.68c.153.112.331.186.518.215l1.138.175a2.678 2.678 0 0 1 2.240 2.24l.174 1.139c.029.187.103.365.215.518l.68.928a2.677 2.677 0 0 1 0 3.17l-.68.928a1.174 1.174 0 0 0-.215.518l-.175 1.138a2.678 2.678 0 0 1-2.241 2.241l-1.138.175a1.17 1.17 0 0 0-.518.215l-.928.68a2.677 2.677 0 0 1-3.17 0l-.928-.68a1.174 1.174 0 0 0-.518-.215L3.83 14.41a2.678 2.678 0 0 1-2.240-2.24l-.175-1.138a1.17 1.17 0 0 0-.215-.518l-.68-.928a2.677 2.677 0 0 1 0-3.17l.68-.928c.112-.153.186-.331.215-.518l.175-1.14a2.678 2.678 0 0 1 2.240-2.24l1.139-.175c.187-.029.365-.103.518-.215l.928-.68a2.677 2.677 0 0 1 3.17 0ZM7.303 1.728l-.927.68a2.67 2.67 0 0 1-1.18.489l-1.137.174a1.179 1.179 0 0 0-.987.987l-.174 1.136a2.677 2.677 0 0 1-.489 1.18l-.68.928a1.18 1.18 0 0 0 0 1.394l.68.927c.256.348.424.753.489 1.18l.174 1.137c.078.509.478.909.987.987l1.136.174a2.67 2.67 0 0 1 1.18.489l.928.68c.414.305.979.305 1.394 0l.927-.68a2.67 2.67 0 0 1 1.18-.489l1.137-.174a1.18 1.18 0 0 0 .987-.987l.174-1.136a2.67 2.67 0 0 1 .489-1.18l.68-.928a1.176 1.176 0 0 0 0-1.394l-.68-.927a2.686 2.686 0 0 1-.489-1.18l-.174-1.137a1.179 1.179 0 0 0-.987-.987l-1.136-.174a2.677 2.677 0 0 1-1.18-.489l-.928-.68a1.176 1.176 0 0 0-1.394 0ZM11.28 6.78l-3.750 3.75a.75.75 0 0 1-1.06 0L4.72 8.78a.751.751 0 0 1 .018-1.042.751.751 0 0 1 1.042-.018L7 8.94l3.22-3.22a.751.751 0 0 1 1.042.018.751.751 0 0 1 .018 1.042Z"/></svg>
<div class="b" style="left:156.20px;top:982.40px;width:201.70px;height:56.00px;background:#f6f8fa;border:2px solid #d3d5d8;border-radius:12px;box-sizing:border-box;box-shadow:0 2px 0 rgba(31,35,40,0.04);"></div>
<div class="t" style="left:183.30px;top:998.30px;font-size:25.00px;line-height:25.00px;letter-spacing:0.529px;font-family:'Liberation Sans', sans-serif;"><span style="font-weight:400;color:#1f2328;-webkit-text-stroke:0.7px #1f2328">Compare</span></div>
<svg class="b" style="left:307.00px;top:994.50px;" width="32.00" height="32.00" viewBox="0 0 16 16"><path fill="#656d76" d="m4.427 7.427 3.396 3.396a.25.25 0 0 0 .354 0l3.396-3.396A.25.25 0 0 0 11.396 7H4.604a.25.25 0 0 0-.177.427Z"/></svg>
<div class="b" style="left:514.00px;top:700.50px;width:1608.00px;height:973.00px;border:2px solid #d0d7de;border-radius:12px;box-sizing:border-box;"></div>
<div class="t" style="left:548.90px;top:750.80px;font-size:68.00px;line-height:68.00px;letter-spacing:0.000px;font-family:'Liberation Sans', sans-serif;transform:scaleX(0.8665);transform-origin:0 0;"><span style="font-weight:600;color:#1f2328">v1.1.0</span></div>
<div class="b" style="left:756.20px;top:765.10px;width:119.40px;height:48.40px;border:2px solid #1f883d;border-radius:24px;box-sizing:border-box;"></div>
<div class="t" style="left:781.00px;top:777.70px;font-size:25.00px;line-height:25.00px;letter-spacing:-0.325px;font-family:'Liberation Sans', sans-serif;"><span style="font-weight:600;color:#1a7f37">Latest</span></div>
<svg class="b" style="left:1974.00px;top:745.00px;" width="32.00" height="32.00" viewBox="0 0 16 16"><path fill="#656d76" d="M11.013 1.427a1.75 1.75 0 0 1 2.474 0l1.086 1.086a1.75 1.75 0 0 1 0 2.474l-8.61 8.61c-.21.21-.47.364-.756.445l-3.251.93a.75.75 0 0 1-.927-.928l.929-3.25c.081-.286.235-.547.445-.758l8.61-8.61Zm.176 4.823L9.75 4.81l-6.286 6.287a.253.253 0 0 0-.064.108l-.558 1.953 1.953-.558a.253.253 0 0 0 .108-.064Zm1.238-3.763a.25.25 0 0 0-.354 0L10.811 3.75l1.439 1.44 1.263-1.263a.25.25 0 0 0 0-.354Z"/></svg>
<svg class="b" style="left:2044.50px;top:744.30px;" width="32.00" height="32.00" viewBox="0 0 16 16"><path fill="#656d76" d="M11 1.75V3h2.25a.75.75 0 0 1 0 1.5H2.75a.75.75 0 0 1 0-1.5H5V1.75C5 .784 5.784 0 6.75 0h2.5C10.216 0 11 .784 11 1.75ZM4.496 6.675l.66 6.6a.25.25 0 0 0 .249.225h5.19a.25.25 0 0 0 .249-.225l.66-6.6a.75.75 0 0 1 1.492.149l-.66 6.6A1.748 1.748 0 0 1 10.595 15h-5.19a1.75 1.75 0 0 1-1.741-1.575l-.66-6.6a.75.75 0 1 1 1.492-.15ZM6.5 1.75V3h3V1.75a.25.25 0 0 0-.25-.25h-2.5a.25.25 0 0 0-.25.25Z"/></svg>
<div class="t" style="left:549.40px;top:874.40px;font-size:25.50px;line-height:25.50px;letter-spacing:-0.434px;font-family:'Liberation Mono', monospace;"><span style="font-weight:400;color:#656d76">fix dst dir bug (#4)</span></div>
<div class="b" style="left:514.00px;top:937.00px;width:1608.00px;height:2.00px;background:#d0d7de;"></div>
<svg class="b" style="left:548.00px;top:999.80px;" width="19.00" height="17.00" viewBox="0 0 19 17"><path d="M0 0 H19 L9.5 17 Z" fill="#1f2328"/></svg>
<div class="t" style="left:572.80px;top:984.10px;font-size:41.00px;line-height:41.00px;letter-spacing:-1.396px;font-family:'Liberation Sans', sans-serif;"><span style="font-weight:600;color:#1f2328">Assets</span></div>
<div class="b" style="left:749.60px;top:989.40px;width:43.00px;height:40.00px;background:#eaeef2;border-radius:20px;"></div>
<div class="t" style="left:765.00px;top:997.00px;font-size:25.00px;line-height:25.00px;letter-spacing:0.000px;font-family:'Liberation Sans', sans-serif;transform:scaleX(0.9281);transform-origin:0 0;"><span style="font-weight:400;color:#1f2328;-webkit-text-stroke:0.7px #1f2328">7</span></div>
<div class="b" style="left:548.50px;top:1067.00px;width:1537.50px;height:483.50px;border:2px solid #d0d7de;border-radius:12px;box-sizing:border-box;"></div>
<svg class="b" style="left:582.50px;top:1083.50px;" width="32.00" height="32.00" viewBox="0 0 16 16"><path fill="#656d76" d="m8.878.392 5.25 3.045c.54.314.872.89.872 1.514v6.098a1.75 1.75 0 0 1-.872 1.514l-5.25 3.045a1.75 1.75 0 0 1-1.756 0l-5.25-3.045A1.75 1.75 0 0 1 1 11.049V4.951c0-.624.332-1.201.872-1.514L7.122.392a1.75 1.75 0 0 1 1.756 0ZM7.875 1.69l-4.63 2.685L8 7.133l4.755-2.758-4.63-2.685a.248.248 0 0 0-.25 0ZM2.5 5.677v5.372c0 .09.047.171.125.216l4.625 2.683V8.432Zm6.25 8.271 4.625-2.683a.25.25 0 0 0 .125-.216V5.677L8.75 8.432Z"/></svg>
<div class="t" style="left:616.20px;top:1088.00px;font-size:29.00px;line-height:29.00px;letter-spacing:0.132px;font-family:'Liberation Sans', sans-serif;"><span style="font-weight:600;color:#0969da">biunzip_windows_386.exe</span></div>
<div class="t" style="left:1634.00px;top:1088.00px;font-size:29.00px;line-height:29.00px;letter-spacing:-0.099px;font-family:'Liberation Sans', sans-serif;"><span style="font-weight:400;color:#656d76">4.75 MB</span></div>
<div class="t" style="left:1884.40px;top:1088.00px;font-size:29.00px;line-height:29.00px;letter-spacing:-0.007px;font-family:'Liberation Sans', sans-serif;"><span style="font-weight:400;color:#656d76">1 minute ago</span></div>
<div class="b" style="left:550.50px;top:1135.07px;width:1533.50px;height:2.00px;background:#d0d7de;"></div>
<svg class="b" style="left:582.50px;top:1152.57px;" width="32.00" height="32.00" viewBox="0 0 16 16"><path fill="#656d76" d="m8.878.392 5.25 3.045c.54.314.872.89.872 1.514v6.098a1.75 1.75 0 0 1-.872 1.514l-5.25 3.045a1.75 1.75 0 0 1-1.756 0l-5.25-3.045A1.75 1.75 0 0 1 1 11.049V4.951c0-.624.332-1.201.872-1.514L7.122.392a1.75 1.75 0 0 1 1.756 0ZM7.875 1.69l-4.63 2.685L8 7.133l4.755-2.758-4.63-2.685a.248.248 0 0 0-.25 0ZM2.5 5.677v5.372c0 .09.047.171.125.216l4.625 2.683V8.432Zm6.25 8.271 4.625-2.683a.25.25 0 0 0 .125-.216V5.677L8.75 8.432Z"/></svg>
<div class="t" style="left:616.20px;top:1157.07px;font-size:29.00px;line-height:29.00px;letter-spacing:0.109px;font-family:'Liberation Sans', sans-serif;"><span style="font-weight:600;color:#0969da">biunzip_windows_amd64.exe</span></div>
<div class="t" style="left:1634.00px;top:1157.07px;font-size:29.00px;line-height:29.00px;letter-spacing:0.417px;font-family:'Liberation Sans', sans-serif;"><span style="font-weight:400;color:#656d76">4.99 MB</span></div>
<div class="t" style="left:1884.40px;top:1157.07px;font-size:29.00px;line-height:29.00px;letter-spacing:-0.007px;font-family:'Liberation Sans', sans-serif;"><span style="font-weight:400;color:#656d76">1 minute ago</span></div>
<div class="b" style="left:550.50px;top:1204.14px;width:1533.50px;height:2.00px;background:#d0d7de;"></div>
<svg class="b" style="left:582.50px;top:1221.64px;" width="32.00" height="32.00" viewBox="0 0 16 16"><path fill="#656d76" d="m8.878.392 5.25 3.045c.54.314.872.89.872 1.514v6.098a1.75 1.75 0 0 1-.872 1.514l-5.25 3.045a1.75 1.75 0 0 1-1.756 0l-5.25-3.045A1.75 1.75 0 0 1 1 11.049V4.951c0-.624.332-1.201.872-1.514L7.122.392a1.75 1.75 0 0 1 1.756 0ZM7.875 1.69l-4.63 2.685L8 7.133l4.755-2.758-4.63-2.685a.248.248 0 0 0-.25 0ZM2.5 5.677v5.372c0 .09.047.171.125.216l4.625 2.683V8.432Zm6.25 8.271 4.625-2.683a.25.25 0 0 0 .125-.216V5.677L8.75 8.432Z"/></svg>
<div class="t" style="left:616.20px;top:1226.14px;font-size:29.00px;line-height:29.00px;letter-spacing:0.247px;font-family:'Liberation Sans', sans-serif;"><span style="font-weight:600;color:#0969da">md5_checksums.txt</span></div>
<div class="t" style="left:1634.00px;top:1226.14px;font-size:29.00px;line-height:29.00px;letter-spacing:-0.115px;font-family:'Liberation Sans', sans-serif;"><span style="font-weight:400;color:#656d76">118 Bytes</span></div>
<div class="t" style="left:1999.20px;top:1226.14px;font-size:29.00px;line-height:29.00px;letter-spacing:-0.237px;font-family:'Liberation Sans', sans-serif;"><span style="font-weight:400;color:#656d76">now</span></div>
<div class="b" style="left:550.50px;top:1273.21px;width:1533.50px;height:2.00px;background:#d0d7de;"></div>
<svg class="b" style="left:582.50px;top:1290.71px;" width="32.00" height="32.00" viewBox="0 0 16 16"><path fill="#656d76" d="m8.878.392 5.25 3.045c.54.314.872.89.872 1.514v6.098a1.75 1.75 0 0 1-.872 1.514l-5.25 3.045a1.75 1.75 0 0 1-1.756 0l-5.25-3.045A1.75 1.75 0 0 1 1 11.049V4.951c0-.624.332-1.201.872-1.514L7.122.392a1.75 1.75 0 0 1 1.756 0ZM7.875 1.69l-4.63 2.685L8 7.133l4.755-2.758-4.63-2.685a.248.248 0 0 0-.25 0ZM2.5 5.677v5.372c0 .09.047.171.125.216l4.625 2.683V8.432Zm6.25 8.271 4.625-2.683a.25.25 0 0 0 .125-.216V5.677L8.75 8.432Z"/></svg>
<div class="t" style="left:616.20px;top:1295.21px;font-size:29.00px;line-height:29.00px;letter-spacing:-0.095px;font-family:'Liberation Sans', sans-serif;"><span style="font-weight:600;color:#0969da">sha1_checksums.txt</span></div>
<div class="t" style="left:1634.00px;top:1295.21px;font-size:29.00px;line-height:29.00px;letter-spacing:0.180px;font-family:'Liberation Sans', sans-serif;"><span style="font-weight:400;color:#656d76">134 Bytes</span></div>
<div class="t" style="left:1999.20px;top:1295.21px;font-size:29.00px;line-height:29.00px;letter-spacing:-0.237px;font-family:'Liberation Sans', sans-serif;"><span style="font-weight:400;color:#656d76">now</span></div>
<div class="b" style="left:550.50px;top:1342.28px;width:1533.50px;height:2.00px;background:#d0d7de;"></div>
<svg class="b" style="left:582.50px;top:1359.78px;" width="32.00" height="32.00" viewBox="0 0 16 16"><path fill="#656d76" d="m8.878.392 5.25 3.045c.54.314.872.89.872 1.514v6.098a1.75 1.75 0 0 1-.872 1.514l-5.25 3.045a1.75 1.75 0 0 1-1.756 0l-5.25-3.045A1.75 1.75 0 0 1 1 11.049V4.951c0-.624.332-1.201.872-1.514L7.122.392a1.75 1.75 0 0 1 1.756 0ZM7.875 1.69l-4.63 2.685L8 7.133l4.755-2.758-4.63-2.685a.248.248 0 0 0-.25 0ZM2.5 5.677v5.372c0 .09.047.171.125.216l4.625 2.683V8.432Zm6.25 8.271 4.625-2.683a.25.25 0 0 0 .125-.216V5.677L8.75 8.432Z"/></svg>
<div class="t" style="left:616.20px;top:1364.28px;font-size:29.00px;line-height:29.00px;letter-spacing:0.343px;font-family:'Liberation Sans', sans-serif;"><span style="font-weight:600;color:#0969da">sha256_checksums.txt</span></div>
<div class="t" style="left:1634.00px;top:1364.28px;font-size:29.00px;line-height:29.00px;letter-spacing:0.105px;font-family:'Liberation Sans', sans-serif;"><span style="font-weight:400;color:#656d76">182 Bytes</span></div>
<div class="t" style="left:1999.20px;top:1364.28px;font-size:29.00px;line-height:29.00px;letter-spacing:-0.237px;font-family:'Liberation Sans', sans-serif;"><span style="font-weight:400;color:#656d76">now</span></div>
<div class="b" style="left:550.50px;top:1411.35px;width:1533.50px;height:2.00px;background:#d0d7de;"></div>
<svg class="b" style="left:582.50px;top:1428.85px;" width="32.00" height="32.00" viewBox="0 0 16 16"><path fill="#656d76" d="M3.5 1.75v11.5c0 .09.048.173.126.217a.75.75 0 0 1-.752 1.298A1.748 1.748 0 0 1 2 13.25V1.75C2 .784 2.784 0 3.75 0h5.586c.464 0 .909.185 1.237.513l2.914 2.914c.329.328.513.773.513 1.237v8.586A1.75 1.75 0 0 1 12.25 15h-.5a.75.75 0 0 1 0-1.5h.5a.25.25 0 0 0 .25-.25V4.664a.25.25 0 0 0-.073-.177L9.513 1.573a.25.25 0 0 0-.177-.073H3.75a.25.25 0 0 0-.25.25Z"/><rect x="6.15" y="1.78" width="1.9" height="1.25" rx="0.6" fill="#656d76"/><rect x="6.15" y="4.88" width="1.9" height="1.25" rx="0.6" fill="#656d76"/><rect x="6.15" y="7.78" width="1.9" height="1.25" rx="0.6" fill="#656d76"/><rect x="8.25" y="3.28" width="1.9" height="1.25" rx="0.6" fill="#656d76"/><rect x="8.25" y="6.38" width="1.9" height="1.25" rx="0.6" fill="#656d76"/><rect x="8.25" y="9.38" width="1.9" height="1.25" rx="0.6" fill="#656d76"/><rect x="6.7" y="11.9" width="2.1" height="3.5" rx="0.7" fill="none" stroke="#656d76" stroke-width="1.4"/></svg>
<div class="t" style="left:616.20px;top:1433.35px;font-size:29.00px;line-height:29.00px;letter-spacing:0.132px;font-family:'Liberation Sans', sans-serif;"><span style="font-weight:600;color:#0969da">Source code </span><span style="font-weight:400;color:#0969da">(zip)</span></div>
<div class="t" style="left:1866.50px;top:1433.35px;font-size:29.00px;line-height:29.00px;letter-spacing:0.277px;font-family:'Liberation Sans', sans-serif;"><span style="font-weight:400;color:#656d76">7 minutes ago</span></div>
<div class="b" style="left:550.50px;top:1480.42px;width:1533.50px;height:2.00px;background:#d0d7de;"></div>
<svg class="b" style="left:582.50px;top:1497.92px;" width="32.00" height="32.00" viewBox="0 0 16 16"><path fill="#656d76" d="M3.5 1.75v11.5c0 .09.048.173.126.217a.75.75 0 0 1-.752 1.298A1.748 1.748 0 0 1 2 13.25V1.75C2 .784 2.784 0 3.75 0h5.586c.464 0 .909.185 1.237.513l2.914 2.914c.329.328.513.773.513 1.237v8.586A1.75 1.75 0 0 1 12.25 15h-.5a.75.75 0 0 1 0-1.5h.5a.25.25 0 0 0 .25-.25V4.664a.25.25 0 0 0-.073-.177L9.513 1.573a.25.25 0 0 0-.177-.073H3.75a.25.25 0 0 0-.25.25Z"/><rect x="6.15" y="1.78" width="1.9" height="1.25" rx="0.6" fill="#656d76"/><rect x="6.15" y="4.88" width="1.9" height="1.25" rx="0.6" fill="#656d76"/><rect x="6.15" y="7.78" width="1.9" height="1.25" rx="0.6" fill="#656d76"/><rect x="8.25" y="3.28" width="1.9" height="1.25" rx="0.6" fill="#656d76"/><rect x="8.25" y="6.38" width="1.9" height="1.25" rx="0.6" fill="#656d76"/><rect x="8.25" y="9.38" width="1.9" height="1.25" rx="0.6" fill="#656d76"/><rect x="6.7" y="11.9" width="2.1" height="3.5" rx="0.7" fill="none" stroke="#656d76" stroke-width="1.4"/></svg>
<div class="t" style="left:616.20px;top:1502.42px;font-size:29.00px;line-height:29.00px;letter-spacing:0.186px;font-family:'Liberation Sans', sans-serif;"><span style="font-weight:600;color:#0969da">Source code </span><span style="font-weight:400;color:#0969da">(tar.gz)</span></div>
<div class="t" style="left:1866.50px;top:1502.42px;font-size:29.00px;line-height:29.00px;letter-spacing:0.277px;font-family:'Liberation Sans', sans-serif;"><span style="font-weight:400;color:#656d76">7 minutes ago</span></div>
<div class="b" style="left:548.00px;top:1585.00px;width:53.20px;height:53.60px;background:#f6f8fa;border:2px solid #d0d7de;border-radius:50%;box-sizing:border-box;"></div>
<svg class="b" style="left:558.00px;top:1595.00px;" width="33.00" height="33.00" viewBox="0 0 16 16"><path fill="#656d76" d="M8 0a8 8 0 1 1 0 16A8 8 0 0 1 8 0ZM1.5 8a6.5 6.5 0 1 0 13 0 6.5 6.5 0 0 0-13 0Zm3.82 1.636a.75.75 0 0 1 1.038.175l.007.009c.103.118.22.222.35.31.264.178.683.37 1.285.37.602 0 1.02-.192 1.285-.371.13-.088.247-.192.35-.31l.007-.008a.75.75 0 0 1 1.222.87l-.022-.015c.02.013.021.015.021.015v.001l-.001.002-.002.003-.005.007-.014.019a2.066 2.066 0 0 1-.184.213c-.16.166-.338.316-.53.445-.63.418-1.37.638-2.127.629-.946 0-1.652-.308-2.126-.63a3.331 3.331 0 0 1-.715-.657l-.014-.02-.005-.006-.002-.003v-.002h-.001l.613-.432-.614.43a.75.75 0 0 1 .183-1.044ZM12 7a1 1 0 1 1-2 0 1 1 0 0 1 2 0ZM5 8a1 1 0 1 1 0-2 1 1 0 0 1 0 2Z"/></svg>
<div class="t" style="left:156.30px;top:1798.80px;font-size:32.00px;line-height:32.00px;letter-spacing:0.854px;font-family:'Liberation Sans', sans-serif;"><span style="font-weight:400;color:#1f2328">last month</span></div>
<div class="b" style="left:155.80px;top:1858.70px;width:42.50px;height:42.50px;border-radius:50%;overflow:hidden;background:#0a0a0a;box-shadow:0 0 0 1.5px rgba(31,35,40,0.12);"><svg width="42.50" height="42.50" viewBox="0 0 100 100" style="display:block;filter:blur(0.47px)"><defs><radialGradient id="av116h" cx="0.5" cy="0.3" r="0.62"><stop offset="0" stop-color="#a0a0a0"/><stop offset="0.45" stop-color="#707070"/><stop offset="0.8" stop-color="#303030"/><stop offset="1" stop-color="#111"/></radialGradient><radialGradient id="av116b" cx="0.5" cy="0.5" r="0.5"><stop offset="0" stop-color="#0d0d0d"/><stop offset="0.7" stop-color="#141414" stop-opacity="0.9"/><stop offset="1" stop-color="#141414" stop-opacity="0"/></radialGradient></defs><rect width="100" height="100" fill="#080808"/><rect x="0" y="26" width="24" height="28" fill="#2a2a2a"/><rect x="76" y="50" width="24" height="28" fill="#262626"/><path d="M8 100 C12 82 30 78 48 80 C68 78 86 82 92 100 Z" fill="#353535"/><path d="M34 80 L48 100 L62 80 Z" fill="#0a0a0a"/><ellipse cx="48" cy="46" rx="24" ry="34" fill="url(#av116h)"/><ellipse cx="48" cy="76" rx="22" ry="13" fill="url(#av116b)"/><circle cx="38" cy="61" r="5" fill="#808080" opacity="0.7"/><circle cx="59" cy="61" r="5" fill="#808080" opacity="0.7"/><circle cx="38" cy="51" r="8" fill="none" stroke="#262626" stroke-width="2.2"/><circle cx="59" cy="51" r="8" fill="none" stroke="#262626" stroke-width="2.2"/><path d="M46 48 L50 48 L51 60 L45 60 Z" fill="#a8a8a8"/><ellipse cx="48" cy="62" rx="5" ry="2.2" fill="#0c0c0c"/><ellipse cx="48" cy="70" rx="7" ry="2" fill="#5a5a5a"/></svg></div>
<div class="t" style="left:205.10px;top:1862.50px;font-size:30.00px;line-height:30.00px;letter-spacing:-0.271px;font-family:'Liberation Sans', sans-serif;"><span style="font-weight:400;color:#656d76">ermanimer</span></div>
<div class="b" style="left:514.00px;top:1740.20px;width:1608.00px;height:500.00px;border:2px solid #d0d7de;border-radius:12px;box-sizing:border-box;"></div>
<div class="t" style="left:548.60px;top:1792.00px;font-size:68.00px;line-height:68.00px;letter-spacing:0.000px;font-family:'Liberation Sans', sans-serif;transform:scaleX(0.9363);transform-origin:0 0;"><span style="font-weight:600;color:#1f2328">v1.0.0</span></div>
<svg class="b" style="left:1974.00px;top:1786.20px;" width="32.00" height="32.00" viewBox="0 0 16 16"><path fill="#656d76" d="M11.013 1.427a1.75 1.75 0 0 1 2.474 0l1.086 1.086a1.75 1.75 0 0 1 0 2.474l-8.61 8.61c-.21.21-.47.364-.756.445l-3.251.93a.75.75 0 0 1-.927-.928l.929-3.25c.081-.286.235-.547.445-.758l8.61-8.61Zm.176 4.823L9.75 4.81l-6.286 6.287a.253.253 0 0 0-.064.108l-.558 1.953 1.953-.558a.253.253 0 0 0 .108-.064Zm1.238-3.763a.25.25 0 0 0-.354 0L10.811 3.75l1.439 1.44 1.263-1.263a.25.25 0 0 0 0-.354Z"/></svg>
<svg class="b" style="left:2044.50px;top:1785.50px;" width="32.00" height="32.00" viewBox="0 0 16 16"><path fill="#656d76" d="M11 1.75V3h2.25a.75.75 0 0 1 0 1.5H2.75a.75.75 0 0 1 0-1.5H5V1.75C5 .784 5.784 0 6.75 0h2.5C10.216 0 11 .784 11 1.75ZM4.496 6.675l.66 6.6a.25.25 0 0 0 .249.225h5.19a.25.25 0 0 0 .249-.225l.66-6.6a.75.75 0 0 1 1.492.149l-.66 6.6A1.748 1.748 0 0 1 10.595 15h-5.19a1.75 1.75 0 0 1-1.741-1.575l-.66-6.6a.75.75 0 1 1 1.492-.15ZM6.5 1.75V3h3V1.75a.25.25 0 0 0-.25-.25h-2.5a.25.25 0 0 0-.25.25Z"/></svg>
</div></body></html>
